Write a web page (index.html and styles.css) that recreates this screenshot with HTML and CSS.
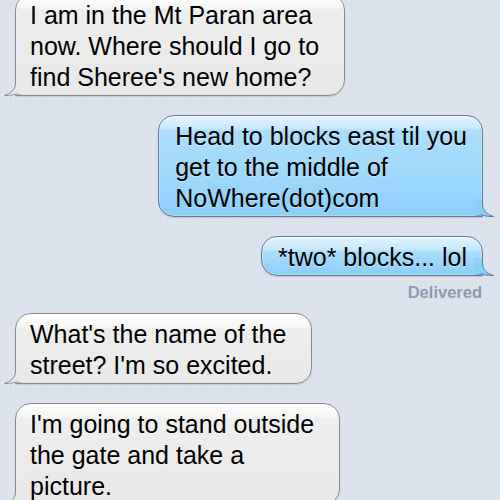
FILE: index.html
```html
<!DOCTYPE html>
<html>
<head>
  <title>Messages</title>
  <link rel="stylesheet" href="styles.css">
</head>
<body>
  <div class="thread">

    <!-- incoming -->
    <div class="msg in">
      <div class="bubble">I am in the Mt Paran area<br>now. Where should I go to<br>find Sheree's new home?
        <svg class="tail" width="20" height="18" viewBox="0 0 20 18"><path class="tail-fill" d="M11.5 0 L11.5 5 C11.5 11 8 15 0.5 17.5 C6 17.8 10 16.5 13 15.8 C15 17 16.5 17.5 20 17.5 L20 0 Z"/><path class="tail-line" d="M11.5 0 L11.5 5 C11.5 11 8 15 0.5 17.5 C6 17.8 10 16.5 13 15.8 C15 17 16.5 17.5 20 17.5"/></svg>
      </div>
    </div>

    <!-- outgoing -->
    <div class="msg out">
      <div class="bubble">Head to blocks east til you<br>get to the middle of<br>NoWhere(dot)com
        <svg class="tail" width="20" height="18" viewBox="0 0 20 18"><path class="tail-fill" d="M11.5 0 L11.5 5 C11.5 11 8 15 0.5 17.5 C6 17.8 10 16.5 13 15.8 C15 17 16.5 17.5 20 17.5 L20 0 Z"/><path class="tail-line" d="M11.5 0 L11.5 5 C11.5 11 8 15 0.5 17.5 C6 17.8 10 16.5 13 15.8 C15 17 16.5 17.5 20 17.5"/></svg>
      </div>
    </div>

    <div class="msg out last">
      <div class="bubble">*two* blocks... lol
        <svg class="tail" width="20" height="18" viewBox="0 0 20 18"><path class="tail-fill" d="M11.5 0 L11.5 5 C11.5 11 8 15 0.5 17.5 C6 17.8 10 16.5 13 15.8 C15 17 16.5 17.5 20 17.5 L20 0 Z"/><path class="tail-line" d="M11.5 0 L11.5 5 C11.5 11 8 15 0.5 17.5 C6 17.8 10 16.5 13 15.8 C15 17 16.5 17.5 20 17.5"/></svg>
      </div>
    </div>
    <div class="status">Delivered</div>

    <div class="msg in">
      <div class="bubble">What's the name of the<br>street? I'm so excited.
        <svg class="tail" width="20" height="18" viewBox="0 0 20 18"><path class="tail-fill" d="M11.5 0 L11.5 5 C11.5 11 8 15 0.5 17.5 C6 17.8 10 16.5 13 15.8 C15 17 16.5 17.5 20 17.5 L20 0 Z"/><path class="tail-line" d="M11.5 0 L11.5 5 C11.5 11 8 15 0.5 17.5 C6 17.8 10 16.5 13 15.8 C15 17 16.5 17.5 20 17.5"/></svg>
      </div>
    </div>

    <div class="msg in">
      <div class="bubble">I'm going to stand outside<br>the gate and take a<br>picture.
        <svg class="tail" width="20" height="18" viewBox="0 0 20 18"><path class="tail-fill" d="M11.5 0 L11.5 5 C11.5 11 8 15 0.5 17.5 C6 17.8 10 16.5 13 15.8 C15 17 16.5 17.5 20 17.5 L20 0 Z"/><path class="tail-line" d="M11.5 0 L11.5 5 C11.5 11 8 15 0.5 17.5 C6 17.8 10 16.5 13 15.8 C15 17 16.5 17.5 20 17.5"/></svg>
      </div>
    </div>

  </div>
</body>
</html>
```

FILE: styles.css
```css
html, body {
    height: 100%;
}

body {
    margin: 0;
    overflow: hidden;
    font-family: "Liberation Sans", Arial, sans-serif;
    background-color: #dbe2ec;
    background-image: repeating-linear-gradient(90deg, #dae1eb 0, #dae1eb 2px, #dce3ed 2px, #dce3ed 5px);
}

.thread {
    display: flex;
    flex-direction: column;
    margin-top: -6px;
}

.msg {
    display: flex;
    margin-bottom: 19px;
}

.msg.in {
    justify-content: flex-start;
    padding-left: 15px;
}

.msg.out {
    justify-content: flex-end;
    padding-right: 17px;
}

.msg.last {
    margin-bottom: 7px;
}

.bubble {
    position: relative;
    font-size: 25px;
    line-height: 31px;
    color: #000;
    white-space: nowrap;
    border: 1px solid #8b8b8b;
    border-radius: 16px;
    text-shadow: 0 1px 0 rgba(255, 255, 255, 0.4);
}

.msg.in .bubble {
    padding: 5px 25px 2px 14px;
    border-bottom-left-radius: 0;
    background: linear-gradient(to bottom, #fdfdfd 0, #f6f6f6 13px, #eeeeee 15px, #e8e8e8 100%);
    box-shadow: inset 0 1px 1px #fff, 0 1px 1px rgba(0, 0, 0, 0.12);
}

.msg.out .bubble {
    padding: 5px 15px 2px 16px;
    border-color: #63789b;
    border-bottom-right-radius: 0;
    background: linear-gradient(to bottom, #e2f4fe 0, #c8e9fc 12px, #abdefb 15px, #a0d9fa 55%, #8ccffa 100%);
    box-shadow: inset 0 1px 1px rgba(255, 255, 255, 0.8), inset 0 0 0 1px rgba(255, 255, 255, 0.25), 0 1px 1px rgba(0, 0, 0, 0.12);
}

.tail {
    position: absolute;
    bottom: -1px;
    display: block;
}

.msg.in .tail {
    left: -12px;
}

.msg.out .tail {
    right: -12px;
    transform: scaleX(-1);
}

.tail-line {
    fill: none;
    stroke: #8b8b8b;
    stroke-width: 1;
}

.msg.in .tail-fill {
    fill: #e8e8e8;
}

.msg.out .tail-fill {
    fill: #8ccffa;
}

.msg.out .tail-line {
    stroke: #63789b;
}

.status {
    align-self: flex-end;
    margin-right: 18px;
    margin-bottom: 12px;
    font-size: 16.5px;
    line-height: 18px;
    font-weight: bold;
    color: #8d9bb2;
}
```
